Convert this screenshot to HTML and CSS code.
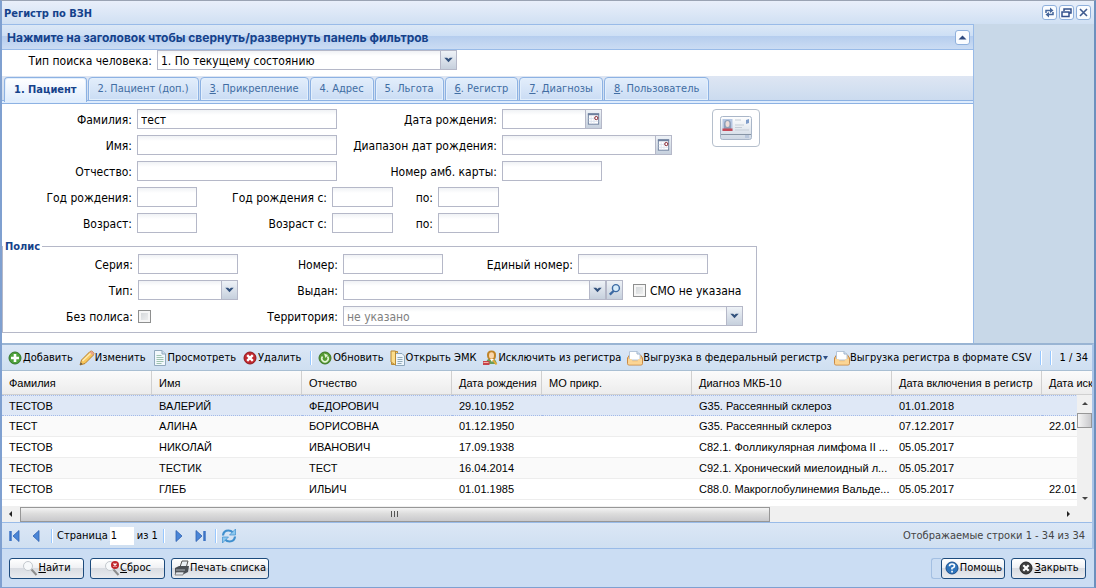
FILE: index.html
```html
<!DOCTYPE html>
<html lang="ru">
<head>
<meta charset="utf-8">
<title>Регистр по ВЗН</title>
<link rel="stylesheet" href="styles.css">
</head>
<body>
<svg class="defs" aria-hidden="true">
  <symbol id="i-arrow" viewBox="0 0 16 18"><path d="M3.500 6.500h3l1.500 1.500 1.500-1.500h3L8 11.500z" fill="#33527d"/></symbol>
  <symbol id="i-cal" viewBox="0 0 16 18"><rect x="2.500" y="3.500" width="11" height="11" fill="#fff" stroke="#6d7f9d"/><path d="M2 4h12" stroke="#6d7f9d" stroke-width="2"/><path d="M5.500 6v8M8.500 6v8M3 8.500h10M3 11.500h10" stroke="#dde3ee"/><circle cx="11" cy="8" r="1.700" fill="#fff" stroke="#7d1420"/></symbol>
  <symbol id="i-out" viewBox="0 0 16 16"><path d="M.5 8L2.500 5h11l2 3v5.500q0 1.500-1.500 1.500H2Q.5 15 .5 13.500z" fill="#f6c277" stroke="#c98a45"/><path d="M2.500 10V1.500H10L13 4v6z" fill="#fff" stroke="#b4c5d9"/><path d="M10 1.500V4h3" fill="#dce8f5" stroke="#9fb4cd"/><path d="M1 9h3.500l1 2.500h5l1-2.500H15v4.500q0 1-1 1H2q-1 0-1-1z" fill="#fbd595"/></symbol>
</svg>
<div class="window">
  <header class="title">
    <h1>Регистр по ВЗН</h1>
    <button class="tool" aria-label="Обновить окно"><svg viewBox="0 0 13 13"><path d="M3 7V4.500h5M10 6v2.500H5" fill="none" stroke="#46669b" stroke-width="1.500"/><path d="M7 1.500l3.500 3L7 7zM6 6L2.500 8.500 6 11.500z" fill="#46669b"/></svg></button>
    <button class="tool" aria-label="Восстановить"><svg viewBox="0 0 13 13"><path d="M4 5V3h7v4H9" fill="none" stroke="#33508c" stroke-width="1.500"/><rect x="2" y="6" width="7" height="4.500" fill="none" stroke="#33508c" stroke-width="1.500"/></svg></button>
    <button class="tool" aria-label="Закрыть окно"><svg viewBox="0 0 13 13"><path d="M3 3l7 7M10 3l-7 7" stroke="#3f5a90" stroke-width="1.600"/></svg></button>
  </header>

  <section class="filters">
    <div class="fhead">
      <h2>Нажмите на заголовок чтобы свернуть/развернуть панель фильтров</h2>
      <button class="tool" aria-label="Свернуть"><svg viewBox="0 0 13 13"><path d="M2.500 8.500l4-4 4 4z" fill="#2f4a80"/></svg></button>
    </div>
    <div class="row search-type">
      <label class="lb w150" for="stype">Тип поиска человека:</label>
      <span class="combo w300"><select id="stype"><option>1. По текущему состоянию</option></select><svg class="trig"><use href="#i-arrow"/></svg></span>
    </div>
    <nav class="tabs">
      <button class="tab on">1. Пациент</button>
      <button class="tab">2. Пациент (доп.)</button>
      <button class="tab"><u>3</u>. Прикрепление</button>
      <button class="tab">4. Адрес</button>
      <button class="tab">5. Льгота</button>
      <button class="tab"><u>6</u>. Регистр</button>
      <button class="tab"><u>7</u>. Диагнозы</button>
      <button class="tab"><u>8</u>. Пользователь</button>
    </nav>
    <form class="form">
      <div class="top">
        <div class="rows">
          <div class="row"><label class="lb w130" for="fam">Фамилия:</label><input class="tx w200" id="fam" value="тест"><label class="lb w160" for="dr">Дата рождения:</label><span class="date w100"><input class="tx" id="dr"><button type="button" class="trig" aria-label="Календарь"><svg><use href="#i-cal"/></svg></button></span></div>
          <div class="row"><label class="lb w130" for="im">Имя:</label><input class="tx w200" id="im"><label class="lb w160" for="ddr">Диапазон дат рождения:</label><span class="date w170"><input class="tx" id="ddr"><button type="button" class="trig" aria-label="Календарь"><svg><use href="#i-cal"/></svg></button></span></div>
          <div class="row"><label class="lb w130" for="ot">Отчество:</label><input class="tx w200" id="ot"><label class="lb w160" for="amb">Номер амб. карты:</label><input class="tx w100" id="amb"></div>
          <div class="row"><label class="lb w130" for="god">Год рождения:</label><input class="tx w60" id="god"><label class="lb w130" for="gods">Год рождения с:</label><input class="tx w61" id="gods"><label class="lb w40" for="godp">по:</label><input class="tx w61" id="godp"></div>
          <div class="row"><label class="lb w130" for="voz">Возраст:</label><input class="tx w60" id="voz"><label class="lb w130" for="vozs">Возраст с:</label><input class="tx w61" id="vozs"><label class="lb w40" for="vozp">по:</label><input class="tx w61" id="vozp"></div>
        </div>
        <button type="button" class="card" aria-label="Считать карту"><svg viewBox="0 0 32 24"><defs><linearGradient id="cg" x2="0" y2="1"><stop offset="0" stop-color="#fff"/><stop offset="1" stop-color="#cdd7e3"/></linearGradient></defs><rect x=".5" y=".5" width="31" height="23" rx="2" fill="url(#cg)" stroke="#a9b6c8"/><rect x="2.500" y="3" width="10" height="12" fill="#b5c6e2"/><path d="M4 13V8q0-4 3.500-4T11 8v5z" fill="#8f9fb8"/><ellipse cx="7.500" cy="8" rx="2" ry="3" fill="#ecdcd8"/><path d="M2.500 12.500h10V15h-10z" fill="#c44957"/><path d="M15 4h6M15 9h9M15 11.500h7M15 14h14" stroke="#c5cdd6"/><path d="M1 18.500h30" stroke="#8795a5"/><path d="M26 4l3-1v4l-3 1z" fill="#7e9cc9"/><path d="M25 19h4v3h-4z" fill="#b9c7dc"/></svg></button>
      </div>
      <fieldset class="polis">
        <legend>Полис</legend>
        <div class="row"><label class="lb w130" for="ser">Серия:</label><input class="tx w100" id="ser"><label class="lb w100" for="nom">Номер:</label><input class="tx w100" id="nom"><label class="lb w130" for="ed">Единый номер:</label><input class="tx w130" id="ed"></div>
        <div class="row"><label class="lb w130" for="tip">Тип:</label><span class="combo w100"><select id="tip"><option></option></select><svg class="trig"><use href="#i-arrow"/></svg></span><label class="lb w100" for="vyd">Выдан:</label><span class="combo w263"><select id="vyd"><option></option></select><svg class="trig"><use href="#i-arrow"/></svg></span><button type="button" class="trig find" aria-label="Найти организацию"><svg viewBox="0 0 16 18"><path d="M3 14l4.500-4.500" stroke="#3c6aa3" stroke-width="2.500"/><circle cx="9.500" cy="7" r="3.700" fill="#d6ecfb" stroke="#3c6aa3" stroke-width="1.500"/></svg></button><input type="checkbox" class="cb smo" id="smo"><label class="after" for="smo">СМО не указана</label></div>
        <div class="row"><label class="lb w130" for="bez">Без полиса:</label><span class="w100 cbox"><input type="checkbox" class="cb" id="bez"></span><label class="lb w100" for="ter">Территория:</label><span class="combo w400"><select id="ter" class="muted"><option>не указано</option></select><svg class="trig"><use href="#i-arrow"/></svg></span></div>
      </fieldset>
    </form>
  </section>

  <section class="grid">
    <div class="bar">
      <button class="act"><svg viewBox="0 0 16 16"><circle cx="8" cy="8" r="6" fill="#4da13a" stroke="#33752a"/><path d="M8 4v8M4 8h8" stroke="#fff" stroke-width="2.600"/></svg>Добавить</button>
      <button class="act"><svg viewBox="0 0 16 16"><path d="M1 15l1.500-5L11 1.500q1.500-1 3 .5t.5 3L6 13.500z" fill="#f8c65a" stroke="#b9812d"/><path d="M3.500 11L12 3" stroke="#fdeab0" stroke-width="1.500"/><path d="M10.500 2.500l3.500 3 .8-1.500q.5-1-1-2.200T11.500 1.500z" fill="#e8a58c"/><path d="M1 15l.8-2.500L3.500 14z" fill="#555"/></svg>Изменить</button>
      <button class="act"><svg viewBox="0 0 16 16"><path d="M2.500.5H10L13.500 4v11.500h-11z" fill="#f2f8fc" stroke="#91a9bd"/><path d="M10 .5V4h3.500" fill="#cfe0ec" stroke="#91a9bd"/><path d="M4.500 5.500h5M4.500 7.500h7M4.500 9.500h7M4.500 11.500h7M4.500 13.500h5" stroke="#9fc4b0"/></svg>Просмотреть</button>
      <button class="act"><svg viewBox="0 0 16 16"><circle cx="8" cy="8" r="6" fill="#c1272d" stroke="#8d191e"/><path d="M5.200 5.200l5.600 5.600M10.800 5.200l-5.600 5.600" stroke="#fff" stroke-width="2.400"/></svg>Удалить</button>
      <i class="sep"></i>
      <button class="act"><svg viewBox="0 0 16 16"><circle cx="8" cy="8" r="6" fill="#559a34" stroke="#3b7424"/><path d="M5.500 6.500a3.200 3.200 0 1 0 5 0" fill="none" stroke="#e4f5d5" stroke-width="1.600"/><path d="M7 3.500l4 1.500-2.500 3z" fill="#e4f5d5"/></svg>Обновить</button>
      <button class="act"><svg viewBox="0 0 16 16"><path d="M1.500 1.500h6v13h-6z" fill="#f7cf6b" stroke="#b98a35"/><path d="M5.500 3.500H12L14.500 6v9.500h-9z" fill="#edf5fb" stroke="#8ca6ba"/><path d="M7.500 7.500h5M7.500 9.500h5M7.500 11.500h5M7.500 13.500h4" stroke="#90a9b8"/><path d="M1 1h4.500v14L1 12z" fill="#fbdd8c" stroke="#b98a35"/></svg>Открыть ЭМК</button>
      <button class="act"><svg viewBox="0 0 16 16"><path d="M4.500 12q0-3.500 4.500-3.500t5.500 4v1.500h-10z" fill="#6c9c54"/><path d="M5 5q0-4.500 4.500-4.500T14 5t-2.500 5H8Q5 9 5 5z" fill="#c08428"/><ellipse cx="9.500" cy="5.500" rx="2.500" ry="3.200" fill="#fbd6ab"/><path d="M8 9l2 3 2-3z" fill="#fff"/><path d="M1 11h6.500v4H1z" fill="#c8434b"/><path d="M1.500 12.500h5" stroke="#f5b2a8"/><path d="M11 10l3.500 4.500" stroke="#e4a93b" stroke-width="2"/></svg>Исключить из регистра</button>
      <button class="act"><svg><use href="#i-out"/></svg>Выгрузка в федеральный регистр<svg class="dd" viewBox="0 0 5 4"><path d="M0 0h5L2.500 4z" fill="#2f4f85"/></svg></button>
      <button class="act"><svg><use href="#i-out"/></svg>Выгрузка регистра в формате CSV</button>
      <i class="sep"></i>
      <i class="sep"></i>
      <span class="count">1 / 34</span>
    </div>
    <div class="view">
      <table>
        <colgroup><col class="c150"><col class="c150"><col class="c150"><col class="c90"><col class="c150"><col class="c200"><col class="c150"><col></colgroup>
        <thead><tr><th>Фамилия</th><th>Имя</th><th>Отчество</th><th>Дата рождения</th><th>МО прикр.</th><th>Диагноз МКБ-10</th><th>Дата включения в регистр</th><th>Дата иск</th></tr></thead>
        <tbody>
          <tr class="sel"><td>ТЕСТОВ</td><td>ВАЛЕРИЙ</td><td>ФЕДОРОВИЧ</td><td>29.10.1952</td><td></td><td>G35. Рассеянный склероз</td><td>01.01.2018</td><td></td></tr>
          <tr class="alt"><td>ТЕСТ</td><td>АЛИНА</td><td>БОРИСОВНА</td><td>01.12.1950</td><td></td><td>G35. Рассеянный склероз</td><td>07.12.2017</td><td>22.01</td></tr>
          <tr><td>ТЕСТОВ</td><td>НИКОЛАЙ</td><td>ИВАНОВИЧ</td><td>17.09.1938</td><td></td><td>C82.1. Фолликулярная лимфома II ...</td><td>05.05.2017</td><td></td></tr>
          <tr class="alt"><td>ТЕСТОВ</td><td>ТЕСТИК</td><td>ТЕСТ</td><td>16.04.2014</td><td></td><td>C92.1. Хронический миелоидный л...</td><td>05.05.2017</td><td></td></tr>
          <tr><td>ТЕСТОВ</td><td>ГЛЕБ</td><td>ИЛЬИЧ</td><td>01.01.1985</td><td></td><td>C88.0. Макроглобулинемия Вальде...</td><td>05.05.2017</td><td>22.01</td></tr>
        </tbody>
      </table>
      <div class="vscroll"><svg viewBox="0 0 16 16"><path d="M5 10l3-3 3 3z" fill="#444"/></svg><i></i><svg class="end" viewBox="0 0 16 16"><path d="M5 7h6l-3 3z" fill="#444"/></svg></div>
    </div>
    <div class="hscroll"><svg viewBox="0 0 16 16"><path d="M10 5v6L7 8z" fill="#222"/></svg><div class="track"><i><svg viewBox="0 0 9 8"><path d="M1.500 1v6M4.500 1v6M7.500 1v6" stroke="#555"/></svg></i></div><svg class="hend" viewBox="0 0 16 16"><path d="M6 5v6l3-3z" fill="#222"/></svg></div>
    <div class="pager">
      <button class="pg" aria-label="Первая"><svg viewBox="0 0 16 16"><path d="M3.500 3v10" stroke="#3c73c4" stroke-width="2.500"/><path d="M12 2.500v11L6 8z" fill="#4a86d8" stroke="#2f5fae" stroke-width=".8"/></svg></button>
      <button class="pg" aria-label="Предыдущая"><svg viewBox="0 0 16 16"><path d="M11 2.500v11L5 8z" fill="#4a86d8" stroke="#2f5fae" stroke-width=".8"/></svg></button>
      <i class="sep"></i>
      <label for="page">Страница</label><input id="page" value="1"><span>из 1</span>
      <i class="sep wide"></i>
      <button class="pg" aria-label="Следующая"><svg viewBox="0 0 16 16"><path d="M5 2.500v11L11 8z" fill="#4a86d8" stroke="#2f5fae" stroke-width=".8"/></svg></button>
      <button class="pg" aria-label="Последняя"><svg viewBox="0 0 16 16"><path d="M12.500 3v10" stroke="#3c73c4" stroke-width="2.500"/><path d="M4 2.500v11L10 8z" fill="#4a86d8" stroke="#2f5fae" stroke-width=".8"/></svg></button>
      <i class="sep"></i>
      <button class="pg" aria-label="Обновить список"><svg viewBox="0 0 16 16"><path d="M2 7.500q.5-5 5.500-5 2.500 0 4.500 2M14 8.500q-.5 5-5.500 5-2.500 0-4.500-2" fill="none" stroke="#3f8fce" stroke-width="2.200"/><path d="M14.500 1v6H8.500zM1.500 15V9h6z" fill="#8cc8ef" stroke="#3f8fce" stroke-width=".7"/></svg></button>
      <span class="info">Отображаемые строки 1 - 34 из 34</span>
    </div>
  </section>

  <footer class="foot">
    <button class="btn b75"><svg viewBox="0 0 16 16"><circle cx="6" cy="6" r="4.500" fill="#f7f9fb" stroke="#c3c8ce"/><path d="M9.500 9.500L14.500 15" stroke="#8c8c8c" stroke-width="2"/></svg><span><u>Н</u>айти</span></button>
    <button class="btn b75"><svg viewBox="0 0 16 16"><circle cx="6" cy="6" r="4.500" fill="#f7f9fb" stroke="#c3c8ce"/><path d="M9.500 9.500L14.500 15" stroke="#8c8c8c" stroke-width="2"/><circle cx="11" cy="5" r="4" fill="#c1272d"/><path d="M9.500 3.500l3 3M12.500 3.500l-3 3" stroke="#fff" stroke-width="1.300"/></svg><span><u>С</u>брос</span></button>
    <button class="btn"><svg viewBox="0 0 16 16"><path d="M6 7l2-6h6l-2 7z" fill="#e9eef4" stroke="#555"/><path d="M1 8l4-2h10l-1 6-4 2H1z" fill="#4b4f55"/><path d="M2 10h9" stroke="#aeb3ba"/><path d="M2 12h8l-1 3H1z" fill="#dfe4ea" stroke="#666" stroke-width=".7"/></svg><span>Печать списка</span></button>
    <span class="stub"></span>
    <button class="btn"><svg viewBox="0 0 16 16"><circle cx="8" cy="8" r="6" fill="#2f74bb" stroke="#1b4f8c"/><path d="M5.500 6.300q0-2.300 2.500-2.300t2.500 2Q10.500 7.500 8 8.200v1.300" fill="none" stroke="#fff" stroke-width="1.700"/><path d="M7.200 10.700h1.700v1.700H7.200z" fill="#fff"/></svg><span>Помощь</span></button>
    <button class="btn b75"><svg viewBox="0 0 16 16"><circle cx="8" cy="8" r="6" fill="#3f3f3f" stroke="#222"/><path d="M5.300 5.300l5.400 5.400M10.700 5.300l-5.400 5.400" stroke="#fff" stroke-width="2.200"/></svg><span><u>З</u>акрыть</span></button>
  </footer>
</div>
</body>
</html>
```
FILE: styles.css
```css
* { box-sizing: border-box; }
body { margin: 0; background: #c8d8e8; color: #000; font: 12px/16px "DejaVu Sans Condensed", "Noto Sans", sans-serif; }
button, input, select { font: inherit; color: inherit; margin: 0; }
button { padding: 0; border: 0; background: none; flex: none; }
.defs { display: none; }
svg { display: block; flex: none; width: 16px; height: 16px; }
h1, h2 { margin: 0; line-height: 16px; color: #15428b; flex: 1; }
h1, .tab, .bar, .pager, .foot { font-size: 11px; }
h1, h2 { padding-top: 2px; }
h2 { font-family: Inter, "Noto Sans", sans-serif; font-size: 12px; }

.window { display: flex; flex-direction: column; min-height: 100vh; border: solid #7fa0d0; border-width: 1px 2px 2px; border-top-color: #9aa3b3; border-right-color: #6d90bd; }
.title { display: flex; align-items: center; gap: 2px; height: 23px; padding: 0 3px 0 2px; background: linear-gradient(#e9effa, #d0e0f3); }
.tool { width: 15px; height: 15px; border: 1px solid #8fb0dc; border-radius: 3px; background: #fafcff; }
.tool svg { width: 13px; height: 13px; }

.filters { width: 972px; max-width: 100%; background: #fff; border-right: 1px solid #99bbe8; }
.fhead { display: flex; align-items: center; height: 26px; padding: 0 3px 0 5px; border: solid #99bbe8; border-width: 1px 0; background: linear-gradient(#dce8f6, #cddff5 45%, #b5cdee 46%, #cbdcf3); }
.row { display: flex; align-items: center; height: 20px; }
.search-type { margin-bottom: 6px; }
.lb { text-align: right; margin-right: 5px; flex: none; white-space: nowrap; }
.lb, .after { padding-top: 2px; }
.w40 { width: 40px; } .w60 { width: 60px; } .w61 { width: 61px; } .w100 { width: 100px; } .w130 { width: 130px; }
.w150 { width: 150px; } .w160 { width: 160px; } .w170 { width: 170px; } .w200 { width: 200px; }
.w263 { width: 263px; } .w300 { width: 300px; } .w400 { width: 400px; }
.tx, .combo select { height: 20px; min-width: 0; padding: 3px 3px 1px; border: 1px solid #b5b8c8; border-radius: 0; background: linear-gradient(#f0f2f5, #fff 5px); outline: 0; }
.combo { display: grid; }
.combo > * { grid-area: 1 / 1; }
.combo select { appearance: none; width: 100%; padding: 2px 3px 0; }
.combo .muted { color: #808080; }
.trig { width: 17px; height: 20px; border: 1px solid #b5b8c8; background: linear-gradient(#eef2f7, #c6d0dd); }
.trig svg { width: 15px; height: 18px; }
.combo .trig { justify-self: end; pointer-events: none; }
.date { display: flex; }
.date .tx { flex: 1; border-right: 0; }
.cb { appearance: none; width: 13px; height: 13px; border: 1px solid #8e8f8f; background: linear-gradient(135deg, #cfd3d6, #f4f4f4); box-shadow: inset 0 0 0 2px #f6f6f6; flex: none; }
.smo { margin: 0 4px 0 10px; }
.cbox { display: flex; }

.tabs { display: flex; gap: 1px; height: 28px; padding: 1px 2px 0; border-bottom: 1px solid #8db2e3; background: linear-gradient(#dee6f3, #cbdbef 24px, #8db2e3 24px, #8db2e3 25px, #deecfd 25px); }
.tab { height: 24px; padding: 0 9px; border: 1px solid #8db2e3; border-radius: 4px 4px 0 0; color: #416da3; background: linear-gradient(#e3eefb, #cadcf4); box-shadow: inset 0 0 0 1px #e3effc; white-space: nowrap; }
.tab.on { height: 25px; border-bottom: 0; color: #15428b; font-weight: bold; background: linear-gradient(#fff, #deecfd); }

.form { padding: 5px 0 10px; }
.top { display: flex; align-items: flex-start; gap: 40px; }
.rows, .polis { display: flex; flex-direction: column; gap: 6px; }
.card { width: 48px; height: 38px; padding: 6px 7px; border: 1px solid #b5bfcc; border-radius: 4px; background: #fff; }
.card svg { width: 32px; height: 24px; }
.polis { width: 755px; max-width: 100%; margin: 5px 0 0; padding: 0 0 6px; border: 1px solid #b5b8c8; }
.polis legend { padding: 2px 2px 0; height: 16px; font-size: 11px; line-height: 14px; font-weight: bold; color: #15428b; }

.grid { flex: 1; display: flex; flex-direction: column; border-top: 2px solid #99b4d3; border-right: 2px solid #a9c4e8; }
.bar { display: flex; align-items: center; height: 26px; padding: 0 4px 0 5px; border-bottom: 1px solid #a9bfd3; background: linear-gradient(#dbe7f6, #cfdff1); white-space: nowrap; }
.act { display: flex; align-items: center; margin-right: 6px; }
.act .dd { width: 5px; height: 4px; margin-left: 1px; }
.sep { flex: none; width: 2px; height: 14px; border-left: 1px solid #98c8ff; border-right: 1px solid #fff; }
.bar .sep { margin: 0 5px 0 3px; }
.count { margin-left: auto; }
.view { position: relative; flex: 1; min-height: 135px; overflow: hidden; background: #fff; font: 11px/14px "Liberation Sans", Arial, sans-serif; }
table { table-layout: fixed; width: 100%; border-collapse: separate; border-spacing: 0; }
.c150 { width: 150px; } .c90 { width: 90px; } .c200 { width: 200px; }
th, td { padding: 0 1px 0 7px; white-space: nowrap; text-align: left; font-weight: normal; }
th { height: 24px; border-right: 1px solid #d0d0d0; border-bottom: 1px solid #d0d0d0; background: linear-gradient(#fbfbfb, #ececec); }
th:last-child { border-right: 0; padding-right: 0; }
td { height: 21px; border-bottom: 1px solid #ededed; }
.alt td { background: #fafafa; }
.sel td { border: dotted #a3bae9; border-width: 1px 0; background: #dfe8f6; }
.vscroll { position: absolute; top: 24px; right: 0; bottom: 0; width: 15px; display: flex; flex-direction: column; background: #f0f0f0; }
.vscroll i { width: 15px; height: 15px; margin-top: 2px; border: 1px solid #979797; background: linear-gradient(90deg, #f5f5f5, #c9c9cc); }
.vscroll .end { margin-top: auto; }
.hscroll { display: flex; align-items: center; height: 16px; padding-right: 15px; background: #f0f0f0; }
.track { flex: 1; margin-left: 2px; }
.track i { display: flex; align-items: center; justify-content: center; width: 72%; height: 15px; border: 1px solid #979797; background: linear-gradient(#f3f3f3, #dcdcdc 45%, #c9c9cc); }
.track svg { width: 9px; height: 8px; }
.pager { display: flex; align-items: center; height: 27px; padding: 0 7px 0 5px; border: solid #99bbe8; border-width: 1px 0; background: linear-gradient(#dbe7f6, #cfdff1); }
.pg { margin-right: 5px; }
.pager .sep { margin: 0 4px 0 2px; }
.pager .wide { margin: 0 6px 0 5px; }
.pager input { width: 24px; height: 18px; margin: 0 3px 0 2px; padding: 0 1px; border: 0; background: #fff; }
.pager .info { margin-left: auto; color: #444; }

.foot { display: flex; align-items: center; gap: 6px; height: 38px; padding: 0 8px 0 7px; background: #cbddf3; }
.btn { display: flex; align-items: center; justify-content: center; height: 21px; padding: 0 2px; border: 1px solid #1c4a7c; border-radius: 3px; background: linear-gradient(#fff, #f0f1f4 45%, #d9dce2 50%, #e9ebef); }
.b75 { width: 75px; }
.stub { width: 10px; height: 21px; margin: 0 -6px 0 auto; border: 1px solid #a3bfe2; border-right: 0; border-radius: 3px 0 0 3px; }
```
